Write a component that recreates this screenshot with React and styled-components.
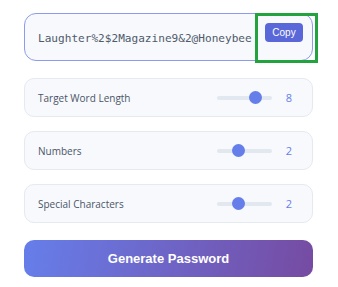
import React from 'react'
import styled, { createGlobalStyle } from 'styled-components'

const Global = createGlobalStyle`
    body {
        margin:0;
        background:#ffffff;
        font-family:"Open Sans", "Noto Sans", sans-serif;
    }
`

const Page = styled.div`
    width:338px;
    padding:13px 25px 12px 24px;
    box-sizing:border-box;
    display:flex;
    flex-direction:column;
`
const PasswordBox = styled.div`
    position:relative;
    height:48px;
    box-sizing:border-box;
    border:1px solid #8e9bec;
    border-radius:12px;
    background-color:#f7f9fc;
    display:flex;
    align-items:center;
    justify-content:space-between;
    padding:0 9px 0 13px;
    margin-bottom:17px;
`
const PasswordText = styled.span`
    font-family:"DejaVu Sans Mono", monospace;
    font-size:11.1px;
    color:#505a6b;
    white-space:nowrap;
    margin-top:3px;
`
const CopyButton = styled.button`
    border:none;
    background-color:#5a67d8;
    color:white;
    font-family:"Liberation Sans", Arial, sans-serif;
    font-size:10px;
    width:38px;
    height:19px;
    padding:0;
    border-radius:4px;
    margin-top:-10px;
    cursor:pointer;
`
const Highlight = styled.div`
    position:absolute;
    left:230px;
    top:-1px;
    width:63px;
    height:50px;
    box-sizing:border-box;
    border:3px solid #22a33d;
    pointer-events:none;
`
const Setting = styled.div`
    height:39px;
    box-sizing:border-box;
    border:1px solid #e5e9f0;
    border-radius:10px;
    background-color:#f7f9fc;
    display:flex;
    align-items:center;
    padding:0 20px 0 13px;
    margin-bottom:14px;
`
const Label = styled.span`
    flex:1;
    font-size:10px;
    color:#4a5568;
`
const Track = styled.div`
    position:relative;
    width:55px;
    height:4px;
    border-radius:2px;
    background-color:#e2e8f0;
`
const Thumb = styled.div`
    position:absolute;
    top:50%;
    width:13px;
    height:13px;
    margin-left:-6.5px;
    margin-top:-6.5px;
    border-radius:50%;
    background-color:#667eea;
`
const Value = styled.span`
    width:20px;
    text-align:right;
    font-size:11px;
    font-weight:500;
    color:#667eea;
`
const Generate = styled.button`
    margin-top:3px;
    height:37px;
    border:none;
    border-radius:10px;
    background:linear-gradient(100deg, #667eea 0%, #764ba2 100%);
    color:white;
    font-family:"Liberation Sans", Arial, sans-serif;
    font-weight:bold;
    font-size:13px;
    cursor:pointer;
`

const settings = [
    { label: 'Target Word Length', value: 8, pos: 0.7 },
    { label: 'Numbers', value: 2, pos: 0.39 },
    { label: 'Special Characters', value: 2, pos: 0.39 },
]

const App = () => {
  return (
    <>
        <Global />
        <Page>
            <PasswordBox>
                <PasswordText>Laughter%2$2Magazine9&amp;2@Honeybee</PasswordText>
                <CopyButton>Copy</CopyButton>
                <Highlight />
            </PasswordBox>
            {settings.map(s => (
                <Setting key={s.label}>
                    <Label>{s.label}</Label>
                    <Track>
                        <Thumb style={{ left: `${s.pos * 100}%` }} />
                    </Track>
                    <Value>{s.value}</Value>
                </Setting>
            ))}
            <Generate>Generate Password</Generate>
        </Page>
    </>
  )
}

export default App
